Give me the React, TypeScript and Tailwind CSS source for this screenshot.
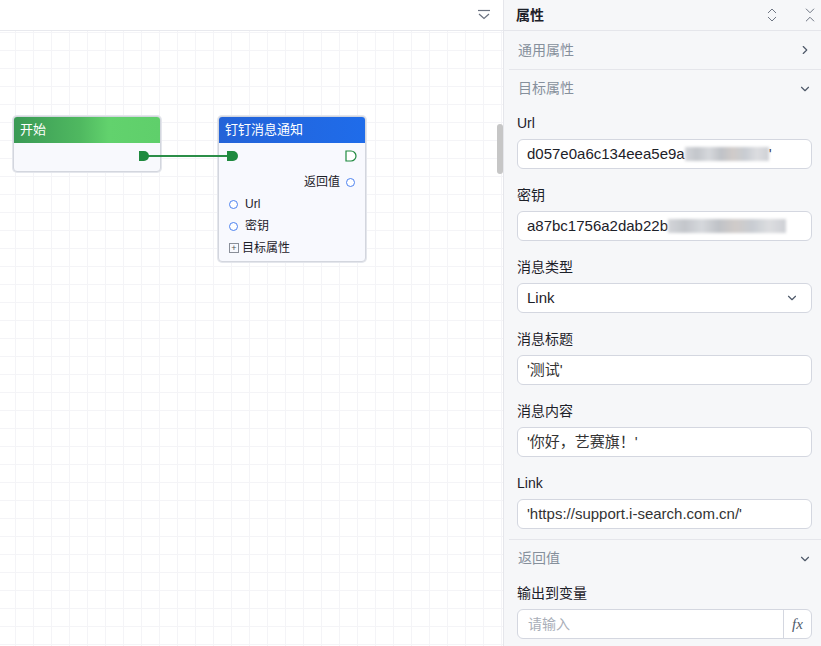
import { ChevronDown, ChevronRight, ChevronsUpDown, ChevronsDownUp } from "lucide-react";

const font = { fontFamily: '"Liberation Sans", "Noto Sans CJK SC", sans-serif' };

function Blur({ w }: { w: number }) {
    return (
        <span
            className="inline-block h-[14px] align-middle blur-[1.5px] bg-[linear-gradient(90deg,#d3d5d9,#c3c6cb,#d6d8dc,#bfc2c7,#d0cbc9,#c8ccd2,#dcdde0,#ced0d5)]"
            style={{ width: w }}
        />
    );
}

function Field({ label, children, select }: { label: string; children: React.ReactNode; select?: boolean }) {
    return (
        <div className="mb-[16px]">
            <div className="h-[20px] leading-[20px] text-[14px] text-[#1d2129]">{label}</div>
            <div className="mt-[6px] h-[30px] bg-white border border-[#d4d7e0] rounded-[6px] flex items-center pl-[9px] pr-[12px] text-[15px] text-[#1d2129] whitespace-nowrap overflow-hidden">
                <div className="flex-1 flex items-center">{children}</div>
                {select && <ChevronDown size={14} className="text-[#4e5969]" />}
            </div>
        </div>
    );
}

function SectionHead({ title, open, top }: { title: string; open?: boolean; top?: boolean }) {
    return (
        <div className={(top ? "border-t border-[#e5e6eb] " : "") + "ml-[5px] h-[38px] flex items-center pl-[9px] pr-[9px] text-[14px] text-[#86909c]"}>
            <span className="flex-1">{title}</span>
            {open ? <ChevronDown size={14} className="text-[#4e5969]" /> : <ChevronRight size={14} className="text-[#4e5969]" />}
        </div>
    );
}

function Port({ hollow, className }: { hollow?: boolean; className: string }) {
    return (
        <svg width="12" height="12" viewBox="0 0 12 12" className={"absolute " + className}>
            <path
                d="M1 1 H6 A5 5 0 0 1 6 11 H1 Z"
                fill={hollow ? "#fff" : "#1f8a3f"}
                stroke="#1f8a3f"
                strokeWidth="1.2"
            />
        </svg>
    );
}

function Dot() {
    return <span className="inline-block w-[9px] h-[9px] rounded-full border border-[#4d82f0] bg-white" />;
}

export default function App() {
    return (
        <div className="w-[821px] h-[646px] flex overflow-hidden bg-white" style={font}>
            {/* canvas */}
            <div className="w-[503px] flex flex-col relative">
                <div className="h-[31px] border-b border-[#e8e9ee] flex items-center justify-end pr-[12px]">
                    <svg width="14" height="12" viewBox="0 0 14 12" fill="none" stroke="#6b7280" strokeWidth="1.2">
                        <path d="M1 1.5 H13" />
                        <path d="M2 5 L7 9.5 L12 5" />
                    </svg>
                </div>
                <div className="flex-1 relative bg-[linear-gradient(90deg,#f4f4f7_1px,transparent_1px),linear-gradient(180deg,#f4f4f7_1px,transparent_1px)] bg-[size:18px_18px] bg-[position:15px_1px]">
                    {/* start node */}
                    <div className="absolute left-[13px] top-[85px] w-[148px] h-[56px] rounded-[4px] border border-[#d3d6de] bg-[#f8f9fd] shadow-[0_0_0_1px_#e4e6ec]">
                        <div className="h-[26px] rounded-t-[3px] bg-[linear-gradient(90deg,#3a9a55_0%,#4fb860_45%,#62d26d_65%,#5fcf6b_100%)] text-white text-[13px] leading-[26px] pl-[6px]">
                            开始
                        </div>
                    </div>

                    {/* dingtalk node */}
                    <div className="absolute left-[218px] top-[85px] w-[148px] h-[146px] rounded-[4px] border border-[#d3d6de] bg-[#f8f9fe] shadow-[0_0_0_1px_#e4e6ec] text-[12px] text-[#1d2129]">
                        <div className="h-[26px] rounded-t-[3px] bg-[linear-gradient(90deg,#2463d8,#1f6cea)] text-white text-[13px] leading-[26px] pl-[6px]">
                            钉钉消息通知
                        </div>
                        <Port hollow className="left-[126px] top-[33px]" />
                        <div className="flex flex-col pt-[28px] px-[10px]">
                            <div className="flex items-center justify-end gap-[6px] h-[22px]">
                                <span>返回值</span>
                                <Dot />
                            </div>
                            <div className="flex items-center gap-[7px] h-[22px]">
                                <Dot />
                                <span>Url</span>
                            </div>
                            <div className="flex items-center gap-[7px] h-[22px]">
                                <Dot />
                                <span>密钥</span>
                            </div>
                            <div className="flex items-center gap-[3px] h-[22px]">
                                <span className="w-[10px] h-[10px] border border-[#8a8f99] flex items-center justify-center text-[9px] leading-none text-[#555]">+</span>
                                <span>目标属性</span>
                            </div>
                        </div>
                    </div>

                    {/* edge, drawn over the nodes */}
                    <svg className="absolute left-0 top-0 pointer-events-none" width="503" height="615">
                        <line x1="146" y1="125" x2="230" y2="125" stroke="#2b8e48" strokeWidth="2" />
                        <path d="M139 120 H144 A5 5 0 0 1 144 130 H139 Z" fill="#1f8a3f" />
                        <path d="M227 120 H233 A5 5 0 0 1 233 130 H227 Z" fill="#1f8a3f" />
                    </svg>

                    {/* scrollbar */}
                    <div className="absolute right-0 top-[93px] w-[6px] h-[50px] rounded-full bg-[#c6c6c6]" />
                </div>
            </div>

            {/* panel */}
            <div className="w-[318px] border-l border-[#e5e6eb] bg-[#f6f7f9] flex flex-col">
                <div className="h-[31px] shrink-0 border-b border-[#e5e6eb] flex items-center pl-[12px] pr-[2px]">
                    <span className="flex-1 text-[14px] font-bold text-[#1d2129]">属性</span>
                    <ChevronsUpDown size={18} strokeWidth={1.3} className="text-[#6b7280] mr-[20px]" />
                    <ChevronsDownUp size={18} strokeWidth={1.3} className="text-[#6b7280]" />
                </div>
                <SectionHead title="通用属性" />
                <SectionHead title="目标属性" open top />
                <div className="pl-[13px] pr-[9px] pt-[6px]">
                    <Field label="Url">
                        <span>d057e0a6c134eea5e9a</span>
                        <Blur w={84} />
                        <span>'</span>
                    </Field>
                    <Field label="密钥">
                        <span>a87bc1756a2dab22b</span>
                        <Blur w={118} />
                    </Field>
                    <Field label="消息类型" select>
                        <span>Link</span>
                    </Field>
                    <Field label="消息标题">
                        <span className="text-[#333]">'测试'</span>
                    </Field>
                    <Field label="消息内容">
                        <span className="text-[#333]">'你好，艺赛旗！'</span>
                    </Field>
                    <div className="-mb-[6px]">
                        <Field label="Link">
                            <span className="text-[#333]">'https://support.i-search.com.cn/'</span>
                        </Field>
                    </div>
                </div>
                <SectionHead title="返回值" open top />
                <div className="pl-[13px] pr-[9px] pt-[6px]">
                    <div className="h-[20px] leading-[20px] text-[14px] text-[#1d2129]">输出到变量</div>
                    <div className="mt-[6px] h-[30px] bg-white border border-[#d4d7e0] rounded-[6px] flex items-center overflow-hidden">
                        <span className="flex-1 pl-[10px] text-[14px] text-[#a9aeb8]">请输入</span>
                        <span className="w-[28px] h-full border-l border-[#d4d7e0] flex items-center justify-center italic text-[15px] text-[#4e5969]" style={{ fontFamily: '"Liberation Serif", serif' }}>
                            fx
                        </span>
                    </div>
                </div>
            </div>
        </div>
    );
}
